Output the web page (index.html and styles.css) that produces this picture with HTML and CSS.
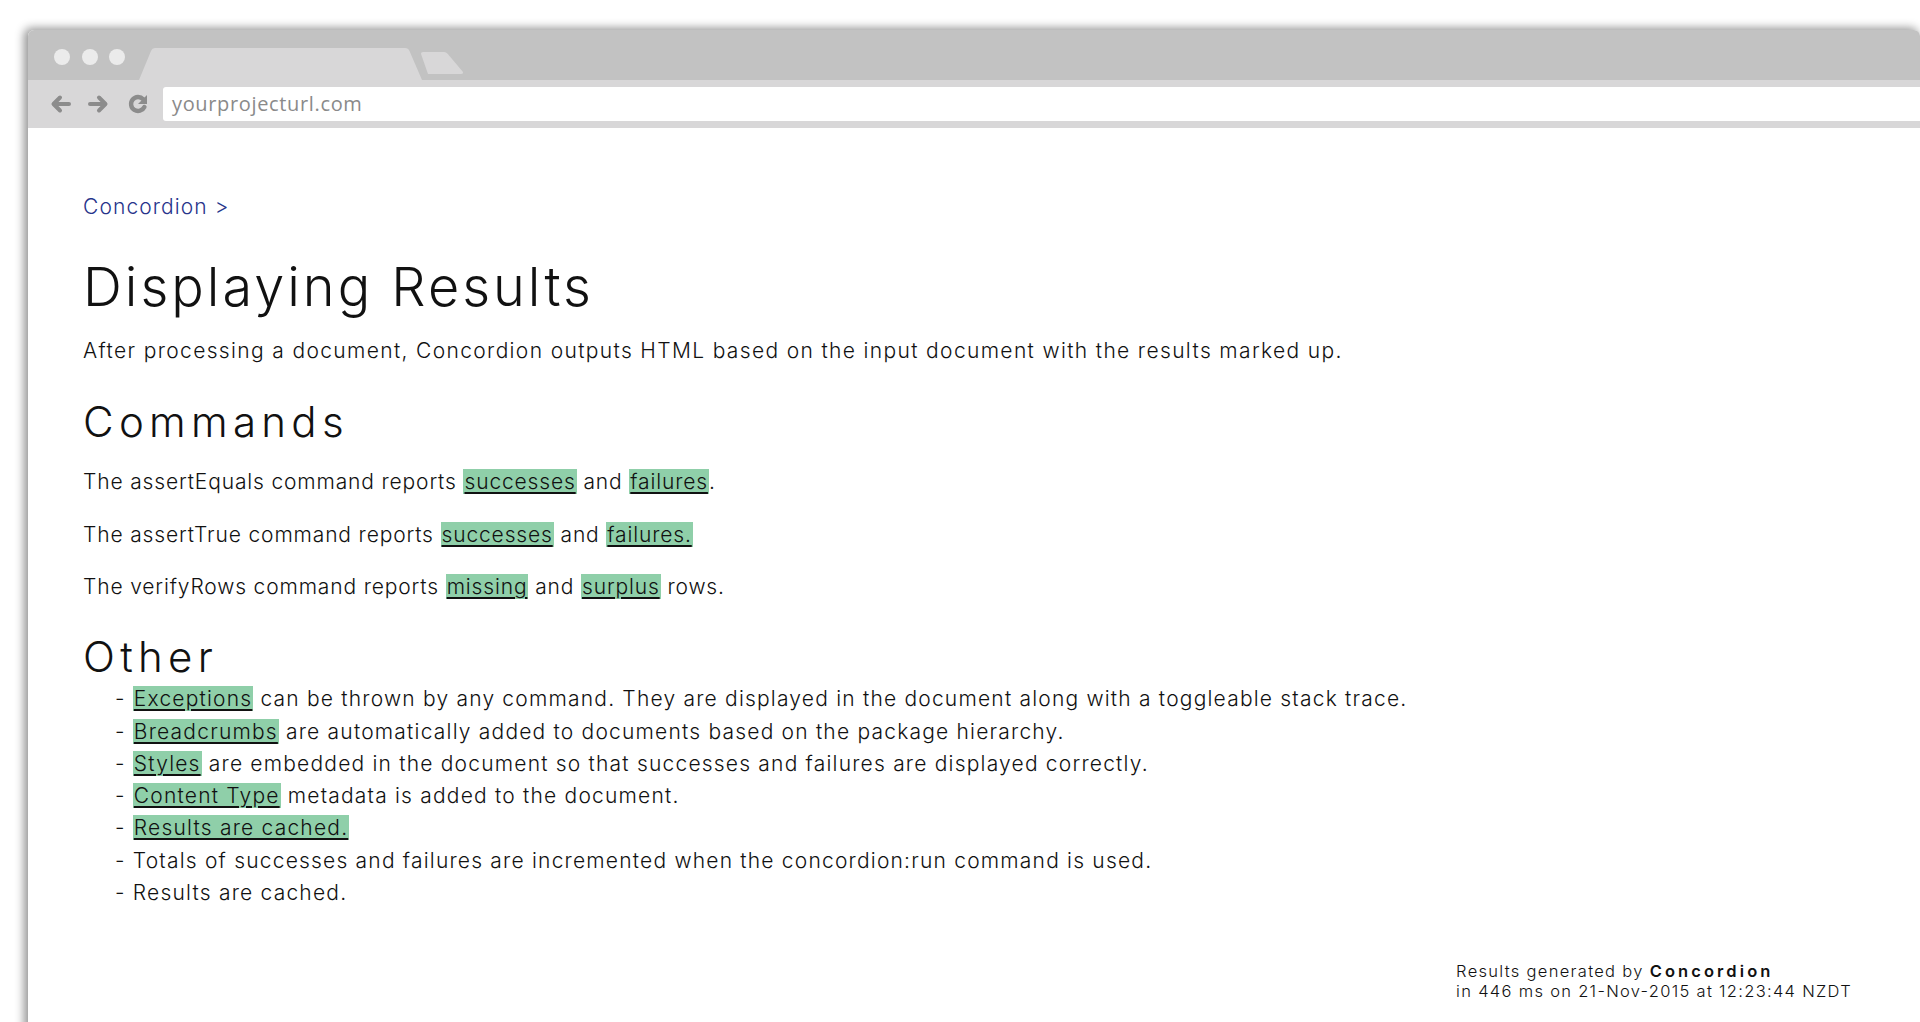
FILE: index.html
```html
<!DOCTYPE html>
<html lang="en">
<head>
<meta charset="utf-8">
<title>Displaying Results</title>
<link rel="stylesheet" href="styles.css">
</head>
<body>
<div class="window">
  <div class="tabbar">
    <div class="dots"><span class="dot"></span><span class="dot"></span><span class="dot"></span></div>
    <svg class="tab-active" width="283" height="32" viewBox="0 0 283 32"><path d="M0 32 L12 3 Q13.2 0 16.5 0 L266 0 Q269.3 0 270.5 3 L283 32 Z" fill="#d8d7d8"/></svg>
    <svg class="tab-new" width="44" height="22" viewBox="0 0 44 22"><path d="M8 22 L1.2 2.6 Q0.4 0 3.2 0 L24 0 Q26.2 0 27.6 1.8 L42.6 19.6 Q44 22 41 22 Z" fill="#d8d7d8"/></svg>
  </div>
  <div class="toolbar">
    <svg class="nav-icon" width="22" height="20" viewBox="0 0 22 20"><path d="M20 10 H5 M11 3.5 L4.5 10 L11 16.5" fill="none" stroke="#8c8c8c" stroke-width="4" stroke-linecap="round" stroke-linejoin="round"/></svg>
    <svg class="nav-icon" width="22" height="20" viewBox="0 0 22 20"><path d="M2 10 H17 M11 3.5 L17.5 10 L11 16.5" fill="none" stroke="#8c8c8c" stroke-width="4" stroke-linecap="round" stroke-linejoin="round"/></svg>
    <svg class="nav-icon" width="22" height="20" viewBox="0 0 22 20"><path d="M16.2 5.2 A7 7 0 1 0 17.4 13" fill="none" stroke="#8c8c8c" stroke-width="4.4" stroke-linecap="round"/><path d="M20 1 L20 10 L11 10 Z" fill="#8c8c8c"/></svg>
    <div class="address">yourprojecturl.com</div>
  </div>
  <main class="page">
    <div class="crumb">Concordion &gt;</div>
    <h1 class="title">Displaying Results</h1>
    <p class="intro">After processing a document, Concordion outputs HTML based on the input document with the results marked up.</p>
    <h2 class="section">Commands</h2>
    <p class="cmd first">The assertEquals command reports <span class="hl">successes</span> and <span class="hl">failures</span>.</p>
    <p class="cmd">The assertTrue command reports <span class="hl">successes</span> and <span class="hl">failures.</span></p>
    <p class="cmd">The verifyRows command reports <span class="hl">missing</span> and <span class="hl">surplus</span> rows.</p>
    <h2 class="section other">Other</h2>
    <ul class="list">
      <li>- <span class="hl">Exceptions</span> can be thrown by any command. They are displayed in the document along with a toggleable stack trace.</li>
      <li>- <span class="hl">Breadcrumbs</span> are automatically added to documents based on the package hierarchy.</li>
      <li>- <span class="hl">Styles</span> are embedded in the document so that successes and failures are displayed correctly.</li>
      <li>- <span class="hl">Content Type</span> metadata is added to the document.</li>
      <li>- <span class="hl">Results are cached.</span></li>
      <li>- Totals of successes and failures are incremented when the concordion:run command is used.</li>
      <li>- Results are cached.</li>
    </ul>
    <div class="footer">
      <div class="footer-text">Results generated by <b>Concordion</b><br>in 446 ms on 21-Nov-2015 at 12:23:44 NZDT</div>
    </div>
  </main>
</div>
</body>
</html>
```
FILE: styles.css
```css
html, body {
  margin: 0;
  padding: 0;
}
body {
  background: #ffffff;
  height: 1022px;
  overflow: hidden;
  padding: 30px 0 0 28px;
  box-sizing: border-box;
}
.window {
  width: 1892px;
  height: 1100px;
  background: #ffffff;
  border-radius: 6px 6px 0 0;
  box-shadow: -3px -1px 10px 1px rgba(0, 0, 0, 0.42);
  overflow: hidden;
}
.tabbar {
  height: 50px;
  background: #c2c2c2;
  display: flex;
  align-items: flex-end;
  padding-left: 26px;
}
.dots {
  align-self: flex-start;
  margin-top: 19px;
  display: flex;
  gap: 11.5px;
}
.dot {
  width: 16px;
  height: 16px;
  border-radius: 50%;
  background: #ebebeb;
}
.tab-active {
  display: block;
  margin-left: 14px;
}
.tab-new {
  display: block;
  margin-left: -2px;
  margin-bottom: 6px;
}
.toolbar {
  height: 48px;
  background: #d8d7d8;
  display: flex;
  align-items: center;
  padding-left: 21px;
}
.nav-icon {
  display: block;
  margin-right: 17px;
}
.nav-icon:last-of-type {
  margin-right: 14px;
}
.address {
  flex: 1;
  height: 34px;
  line-height: 34px;
  background: #ffffff;
  border-radius: 3px 0 0 3px;
  padding-left: 9px;
  font-family: "Open Sans", sans-serif;
  font-size: 20px;
  color: #8a8a8a;
  letter-spacing: 0.65px;
}
.page {
  padding: 67.4px 68px 0 55px;
  font-family: Inter, "Liberation Sans", sans-serif;
  font-weight: 300;
  color: #111111;
  font-size: 21px;
  line-height: 24px;
  letter-spacing: 1.1px;
  width: 1769px;
}
.crumb {
  color: #27348b;
}
.title {
  margin: 38px 0 0 0;
  font-size: 54px;
  line-height: 60px;
  font-weight: 300;
  letter-spacing: 3px;
}
.intro {
  margin: 22px 0 0 0;
  letter-spacing: 1.35px;
}
.section {
  margin: 34.3px 0 0 0;
  font-size: 42px;
  line-height: 48px;
  font-weight: 300;
  letter-spacing: 5.3px;
}
.cmd {
  margin: 28.5px 0 0 0;
  letter-spacing: 0.85px;
}
.cmd.first {
  margin-top: 24.7px;
}
.section.other {
  margin-top: 33.3px;
}
.hl {
  background: #8fcfa9;
  text-decoration: underline;
  text-decoration-thickness: 1.5px;
  text-underline-offset: 3px;
  padding: 0 1px;
}
.list {
  margin: 2.5px 0 0 0;
  padding: 0 0 0 32px;
  list-style: none;
  line-height: 32.33px;
  letter-spacing: 1.2px;
}
.footer {
  margin-top: 51.5px;
  display: flex;
  justify-content: flex-end;
}
.footer-text {
  font-size: 16.5px;
  line-height: 20px;
  letter-spacing: 1.3px;
}
.footer-text b {
  font-weight: 600;
  letter-spacing: 3.1px;
}
```
